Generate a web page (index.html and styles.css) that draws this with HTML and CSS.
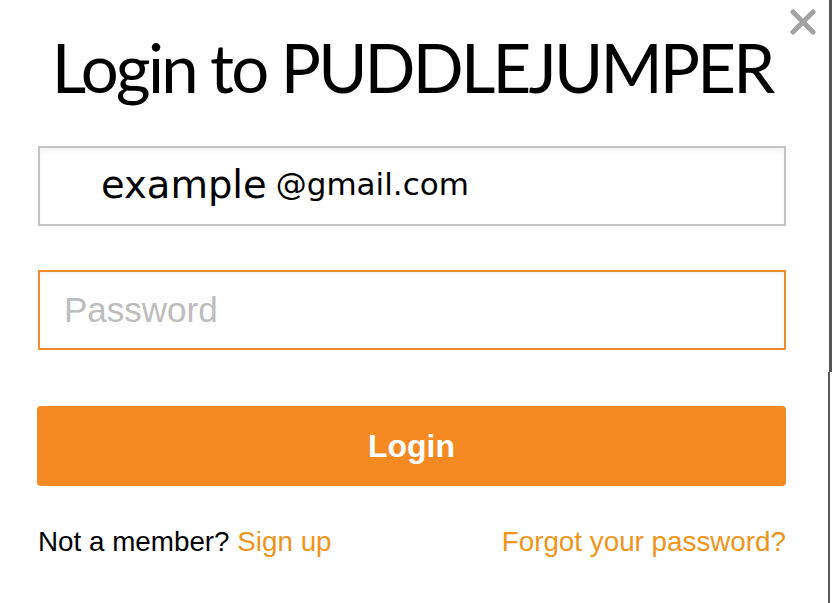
FILE: index.html
```html
<!DOCTYPE html>
<html lang="en">
<head>
<meta charset="utf-8">
<title>Login to PUDDLEJUMPER</title>
<link rel="stylesheet" href="styles.css">
</head>
<body>
<div class="modal">
  <button class="close" aria-label="Close">
    <svg width="26" height="26" viewBox="0 0 26 26"><path d="M3 3 L23 23 M23 3 L3 23" stroke="#a3a3a3" stroke-width="5" stroke-linecap="round" fill="none"/></svg>
  </button>
  <h1 class="title">Login to PUDDLEJUMPER</h1>
  <form class="form">
    <div class="field field-email"><span class="ex">example</span><span class="dom">@gmail.com</span></div>
    <div class="field field-pass"><span class="placeholder">Password</span></div>
    <div class="btn">Login</div>
  </form>
  <div class="footer">
    <span class="member">Not a member? <a class="link" href="#">Sign up</a></span>
    <a class="link" href="#">Forgot your password?</a>
  </div>
</div>
</body>
</html>
```
FILE: styles.css
```css
html {
  background:
    linear-gradient(#555, #555) 829px 0 / 3px 372px no-repeat,
    linear-gradient(#5c5c5c, #5c5c5c) 828px 372px / 2px 231px no-repeat,
    #fff;
  height: 100%;
}
body {
  margin: 0;
  width: 832px;
  height: 603px;
  font-family: "Liberation Sans", Arial, sans-serif;
}
.modal {
  position: relative;
  padding: 27px 46px 0 38px;
}
.close {
  position: absolute;
  top: 9px;
  right: 16px;
  border: 0;
  background: none;
  padding: 0;
  width: 26px;
  height: 26px;
  cursor: pointer;
}
.close svg { display: block; }
.title {
  margin: 0;
  text-align: center;
  font-family: Lato, sans-serif;
  font-weight: 400;
  font-size: 67px;
  line-height: 80px;
  letter-spacing: -2.8px;
  color: #000;
}
.form {
  display: flex;
  flex-direction: column;
  margin-top: 39px;
}
.field {
  height: 76px;
  border: 2px solid #c4c4c4;
  box-shadow: inset 0 4px 6px -2px rgba(0,0,0,0.06);
  display: flex;
  align-items: center;
  box-sizing: content-box;
}
.field-email {
  padding-left: 61px;
  color: #000;
}
.ex {
  font-family: "DejaVu Sans", sans-serif;
  font-size: 38.5px;
  margin-right: 9px;
  position: relative;
  top: -2px;
}
.dom {
  font-family: "DejaVu Sans", sans-serif;
  font-size: 31px;
  position: relative;
  top: -2px;
}
.field-pass {
  margin-top: 44px;
  border-color: #ef8d2e;
  padding-left: 24px;
}
.placeholder {
  font-size: 35px;
  color: #bdbdbd;
}
.btn {
  margin-top: 56px;
  height: 80px;
  margin-left: -1px;
  border-radius: 4px;
  background: #f58a22;
  color: #fff;
  font-size: 32px;
  font-weight: 700;
  display: flex;
  align-items: center;
  justify-content: center;
}
.footer {
  margin-top: 40px;
  display: flex;
  justify-content: space-between;
  align-items: baseline;
  font-size: 27.8px;
  color: #000;
}
.link {
  color: #f0941c;
  text-decoration: none;
}
```
